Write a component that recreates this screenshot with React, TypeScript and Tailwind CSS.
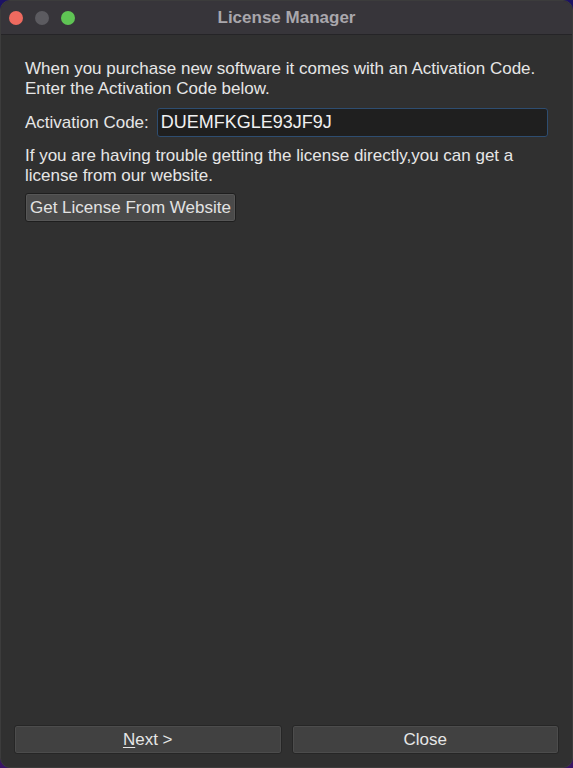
import React from "react";

const App = () => {
  return (
    <div className="w-[573px] h-[768px] bg-gradient-to-b from-[#1c1264] to-[#3a1466] overflow-hidden">
      <div
        className="w-full h-full rounded-[10px] bg-[#303030] flex flex-col overflow-hidden border border-[#3c3c3c]"
        style={{ fontFamily: '"Liberation Sans", Arial, sans-serif' }}
      >
        <div className="h-[34px] shrink-0 bg-[#37353a] border-b border-[#252427] flex items-center relative">
          <div className="flex items-center gap-[12px] pl-[8px]">
            <span className="w-[14px] h-[14px] rounded-full bg-[#ee6a5f]" />
            <span className="w-[14px] h-[14px] rounded-full bg-[#5c5b60]" />
            <span className="w-[14px] h-[14px] rounded-full bg-[#5fc454]" />
          </div>
          <div className="absolute inset-0 flex items-center justify-center text-[17px] font-bold text-[#a9a7ac] pointer-events-none">
            License Manager
          </div>
        </div>

        <div className="flex-1 flex flex-col px-[24px] pt-[24px] text-[17px] text-[#e6e6e6]">
          <p className="leading-[20px]">
            When you purchase new software it comes with an Activation Code.
            <br />
            Enter the Activation Code below.
          </p>
          <div className="flex items-center mt-[9px] gap-[8px]">
            <span>Activation Code:</span>
            <div className="flex-1 h-[29px] rounded-[3px] border border-[#2e4d70] bg-[#1f1f1f] flex items-center px-[3px] text-[18px] text-[#f0f0f0]">
              DUEMFKGLE93JF9J
            </div>
          </div>
          <p className="leading-[20px] mt-[9px]">
            If you are having trouble getting the license directly,you can get a
            <br />
            license from our website.
          </p>
          <div className="mt-[7px]">
            <button className="h-[29px] px-[4px] rounded-[3px] border border-[#1e1e1e] bg-[#4a4a4a] text-[#e2e2e2] shadow-[inset_0_0_0_1px_#565656]">
              Get License From Website
            </button>
          </div>
        </div>

        <div className="shrink-0 flex gap-[10px] px-[13px] pb-[13px]">
          <button className="flex-1 h-[29px] rounded-[3px] border border-[#262626] bg-[#414141] text-[#e6e6e6] text-[17px] shadow-[inset_0_0_0_1px_#4c4c4c]">
            <span className="underline underline-offset-2">N</span>ext &gt;
          </button>
          <button className="flex-1 h-[29px] rounded-[3px] border border-[#262626] bg-[#414141] text-[#e6e6e6] text-[17px] shadow-[inset_0_0_0_1px_#4c4c4c]">
            Close
          </button>
        </div>
      </div>
    </div>
  );
};

export default App;
